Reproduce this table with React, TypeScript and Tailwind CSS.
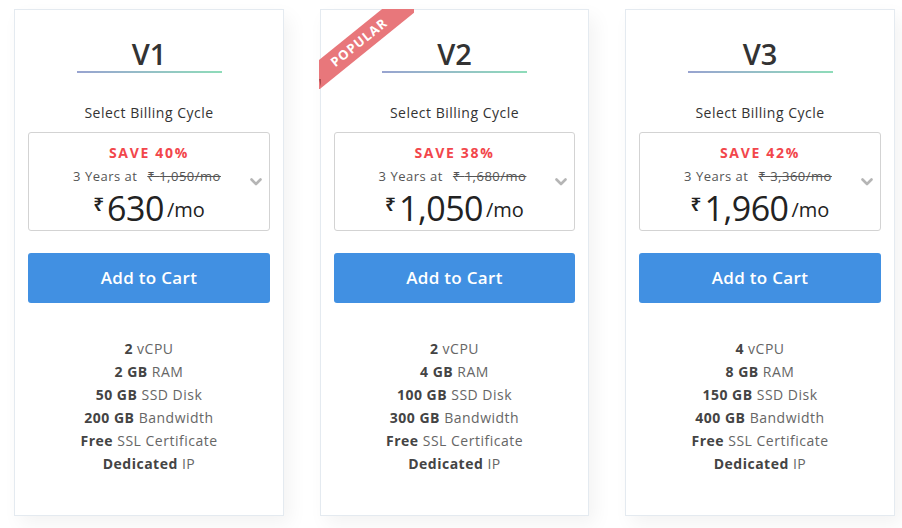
const plans = [
  {
    name: "V1",
    save: "40%",
    old: "1,050",
    price: "630",
    popular: false,
    features: [
      ["2", "vCPU"],
      ["2 GB", "RAM"],
      ["50 GB", "SSD Disk"],
      ["200 GB", "Bandwidth"],
      ["Free", "SSL Certificate"],
      ["Dedicated", "IP"],
    ],
  },
  {
    name: "V2",
    save: "38%",
    old: "1,680",
    price: "1,050",
    popular: true,
    features: [
      ["2", "vCPU"],
      ["4 GB", "RAM"],
      ["100 GB", "SSD Disk"],
      ["300 GB", "Bandwidth"],
      ["Free", "SSL Certificate"],
      ["Dedicated", "IP"],
    ],
  },
  {
    name: "V3",
    save: "42%",
    old: "3,360",
    price: "1,960",
    popular: false,
    features: [
      ["4", "vCPU"],
      ["8 GB", "RAM"],
      ["150 GB", "SSD Disk"],
      ["400 GB", "Bandwidth"],
      ["Free", "SSL Certificate"],
      ["Dedicated", "IP"],
    ],
  },
];

function Ribbon() {
  return (
    <>
      <div className="pointer-events-none absolute -left-[2px] -top-[1px] h-[80px] w-[95px] overflow-hidden">
        <div className="absolute left-[-30px] top-[22px] flex h-[23px] w-[140px] -rotate-[39deg] items-center justify-center bg-[#e8777b] text-[13px] font-bold tracking-[1px] text-white">
          POPULAR
        </div>
      </div>
      {/* fold under the ribbon */}
      <div className="absolute -left-[2px] top-[69px] h-0 w-0 border-l-[2px] border-t-[8px] border-l-transparent border-t-[#a8494c]" />
    </>
  );
}

function Chevron() {
  return (
    <svg width="12" height="8" viewBox="0 0 12 8" fill="none">
      <path d="M1.5 1.5 L6 6 L10.5 1.5" stroke="#b5b5b5" strokeWidth="2.6" strokeLinecap="round" strokeLinejoin="round" />
    </svg>
  );
}

function PlanCard({ plan }: { plan: (typeof plans)[number] }) {
  return (
    <div
      className={`relative flex h-[507px] flex-col items-center border border-[#e4eaf0] bg-white px-[13px] pt-[28px] shadow-[6px_8px_18px_rgba(0,0,0,0.05)] ${
        plan.popular ? "w-[269px]" : "w-[270px]"
      }`}
    >
      {plan.popular ? <Ribbon /> : null}
      <div className="text-[29px] font-semibold leading-[32px] tracking-normal text-[#333]">{plan.name}</div>
      <div className="mt-[1px] h-[2px] w-[145px] bg-gradient-to-r from-[#98a3d0] to-[#8edcb9]" />
      <div className="mt-[30px] text-[14px] leading-[20px] text-[#333]">Select Billing Cycle</div>

      <div className="relative mt-[9px] flex h-[99px] w-full flex-col items-center rounded-[3px] border border-[#d3d3d3] pt-[10px]">
        <div className="text-[14px] font-bold leading-[20px] tracking-[1.7px] text-[#f2464b]">SAVE {plan.save}</div>
        <div className="mt-[4px] text-[13px] leading-[18px] text-[#555]">
          3 Years at{" "}
          <span className="ml-[2px] px-[4px] line-through decoration-[#555]">₹ {plan.old}/mo</span>
        </div>
        <div className="mt-[5px] flex items-start leading-[36px] tracking-normal text-[#222]">
          <span className="mr-[3px] mt-[-4px] text-[19px] font-semibold">₹</span>
          <span className="text-[34px] tracking-[-0.5px]">{plan.price}</span>
          <span className="ml-[3px] mt-[2px] text-[20px]">/mo</span>
        </div>
        <div className="absolute right-[7px] top-[45px]">
          <Chevron />
        </div>
      </div>

      <button className="mt-[22px] h-[50px] w-full rounded-[3px] bg-[#4190e2] text-[17px] font-semibold tracking-[0.3px] text-white">
        Add to Cart
      </button>

      <ul className="mt-[34px] flex flex-col items-center">
        {plan.features.map(([b, r], i) => (
          <li key={i} className="text-[14px] leading-[23px] text-[#666]">
            <span className="font-bold text-[#444]">{b}</span> {r}
          </li>
        ))}
      </ul>
    </div>
  );
}

export default function App() {
  return (
    <div
      className="flex h-[528px] w-[902px] gap-[36px] bg-white pl-[14px] pt-[9px] tracking-[0.5px]"
      style={{ fontFamily: '"Open Sans", "Noto Sans", sans-serif' }}
    >
      {plans.map((p) => (
        <PlanCard key={p.name} plan={p} />
      ))}
    </div>
  );
}
